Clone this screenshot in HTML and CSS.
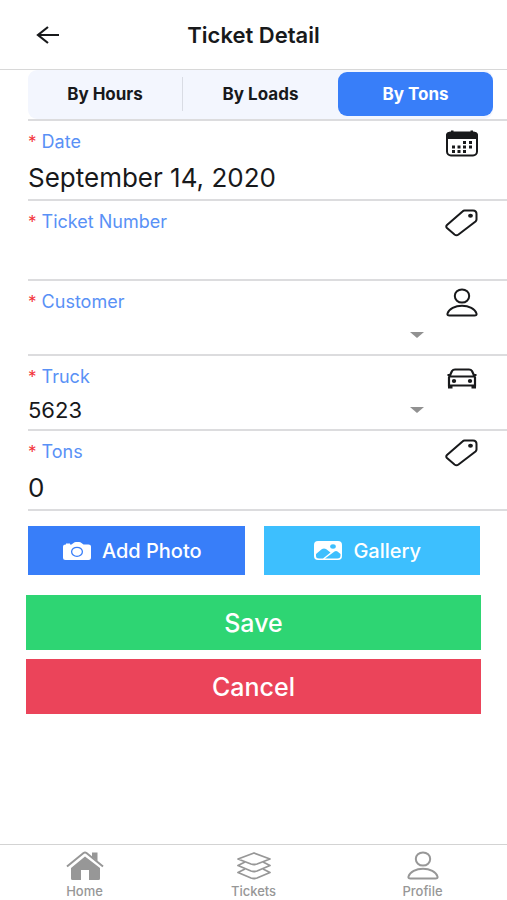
FILE: index.html
```html
<!DOCTYPE html>
<html lang="en">
<head>
    <meta charset="UTF-8">
    <meta name="viewport" content="width=device-width, initial-scale=1.0">
    <title>Ticket Detail</title>
    <link rel="stylesheet" href="styles.css">
</head>
<body>
    <!-- Icons used more than once -->
    <svg class="sprite" aria-hidden="true">
        <symbol id="tag" viewBox="0 0 36 30">
            <path d="M20.5 2.5H29Q32.5 2.5 32.5 6V11.5Q32.5 12.5 31.5 13.5L14.5 26.5Q12.5 28 10.5 26.5L3 20Q1.5 18.500 3 17L18.5 3.5Q19.5 2.5 20.5 2.5Z" fill="none" stroke="currentColor" stroke-width="2"/>
            <ellipse cx="26.500" cy="7.800" rx="2.400" ry="2" fill="currentColor"/>
        </symbol>
        <symbol id="person" viewBox="0 0 36 30">
            <ellipse cx="18" cy="8" rx="7.200" ry="6.600" fill="none" stroke="currentColor" stroke-width="2"/>
            <path d="M5.5 27.500Q3 27.500 3.500 25.500C5 21 11 17.800 18 17.800S31 21 32.500 25.500Q33 27.500 30.500 27.500Z" fill="none" stroke="currentColor" stroke-width="2"/>
        </symbol>
        <symbol id="caret" viewBox="0 0 14 6">
            <path d="M0 0H14L7 6Z" fill="currentColor"/>
        </symbol>
    </svg>

    <header class="header">
        <button class="back" type="button" aria-label="Back">
            <svg viewBox="0 0 24 18" width="24" height="18">
                <path d="M12 1L2 9L12 17M2 9H23" fill="none" stroke="currentColor" stroke-width="2.200"/>
            </svg>
        </button>
        <h1>Ticket Detail</h1>
    </header>

    <main class="content">
        <div class="segment-row">
            <div class="segment">
                <button type="button">By Hours</button>
                <button type="button">By Loads</button>
                <button type="button" class="active">By Tons</button>
            </div>
        </div>

        <form class="form">
            <div class="field">
                <label for="date"><span class="required">*</span> Date</label>
                <svg class="field-icon" viewBox="0 0 36 30">
                    <rect x="3" y="4.500" width="30" height="23" rx="4" fill="none" stroke="currentColor" stroke-width="2"/>
                    <path d="M2 11V7.500Q2 4 5 4H31Q34 4 34 7.500V11ZM7 2.500H9.500V5H7ZM26.500 2.500H29V5H26.500Z" fill="currentColor"/>
                    <path d="M19 14.500h3M25 14.500h3M8 19h3M13.500 19h3M19 19h3M25 19h3M8 23.500h3M13.500 23.500h3M19 23.500h3" stroke="currentColor" stroke-width="3"/>
                </svg>
                <input type="text" id="date" value="September 14, 2020">
            </div>

            <div class="field">
                <label for="ticketNumber"><span class="required">*</span> Ticket Number</label>
                <svg class="field-icon"><use href="#tag"/></svg>
                <input type="text" id="ticketNumber">
            </div>

            <div class="field select-field">
                <label for="customer"><span class="required">*</span> Customer</label>
                <svg class="field-icon"><use href="#person"/></svg>
                <div class="select">
                    <select id="customer">
                        <option value=""></option>
                    </select>
                    <svg class="caret"><use href="#caret"/></svg>
                </div>
            </div>

            <div class="field select-field">
                <label for="truck"><span class="required">*</span> Truck</label>
                <svg class="field-icon" viewBox="0 0 36 30">
                    <path d="M5 14.500L8 8Q9 6.500 11 6.500H25Q27 6.500 28 8L31 14.500V22.500H5ZM5 13.500H31" fill="none" stroke="currentColor" stroke-width="2.200"/>
                    <path d="M4 22H8.500V25.500H4ZM27.500 22H32V25.500H27.500ZM3.500 11H6V13H3.500ZM30 11H32.500V13H30Z" fill="currentColor"/>
                    <ellipse cx="10" cy="18" rx="2.200" ry="1.900" fill="currentColor"/>
                    <ellipse cx="26" cy="18" rx="2.200" ry="1.900" fill="currentColor"/>
                </svg>
                <div class="select">
                    <select id="truck">
                        <option>5623</option>
                    </select>
                    <svg class="caret"><use href="#caret"/></svg>
                </div>
            </div>

            <div class="field">
                <label for="tons"><span class="required">*</span> Tons</label>
                <svg class="field-icon"><use href="#tag"/></svg>
                <input type="text" id="tons" inputmode="decimal" value="0">
            </div>

            <div class="media-buttons">
                <button type="button" class="photo">
                    <svg viewBox="0 0 28 18" width="28" height="18">
                        <path d="M2.500 2.500H3V1.500H7V2.500H8.500L10.500 1Q11.500 0 13 0H16Q17.500 0 18.500 1L20.500 2.500H25.500Q28 2.500 28 4.500V15.500Q28 18 25.500 18H2.500Q0 18 0 15.500V4.500Q0 2.500 2.500 2.500Z" fill="currentColor"/>
                        <ellipse cx="14" cy="9.800" rx="5.400" ry="4.500" fill="none" stroke="#387ef9" stroke-width="1.300"/>
                    </svg>
                    Add Photo
                </button>
                <button type="button" class="gallery">
                    <svg viewBox="0 0 28 19" width="28" height="19">
                        <rect width="28" height="19" rx="4" fill="currentColor"/>
                        <ellipse cx="19" cy="5.500" rx="2.800" ry="2.200" fill="#3dbffe"/>
                        <path d="M2 13L8 8Q10 6.800 12 8L16.500 11.500L9 17.500H5Q2 17.500 2 15ZM11 17.500L20.500 10.500Q22 9.500 23.500 10.500L26.500 13V14.500Q26.500 17.500 23.500 17.500Z" fill="#3dbffe"/>
                    </svg>
                    Gallery
                </button>
            </div>

            <div class="form-buttons">
                <button type="submit" class="save">Save</button>
                <button type="button" class="cancel">Cancel</button>
            </div>
        </form>
    </main>

    <nav class="tabs">
        <a href="#home">
            <svg viewBox="0 0 38 30" width="38" height="30">
                <path d="M19 5.500L34 17V27.500Q34 29 32.500 29H23V19H15V29H6.500Q5 29 5 27.500V17Z" fill="currentColor"/>
                <path d="M1 15.500L17.500 2Q19 1 20.500 2L37 15.500" fill="none" stroke="currentColor" stroke-width="2"/>
                <path d="M26 1.500H31.500V10L26 6Z" fill="currentColor"/>
            </svg>
            Home
        </a>
        <a href="#tickets">
            <svg viewBox="0 0 38 30" width="38" height="30" fill="none" stroke="currentColor" stroke-width="1.800" stroke-linejoin="round">
                <path d="M19 2L35 8L22 13Q19 14 16 13L3 8Z"/>
                <path d="M10 11L3 14.500L16 20Q19 21 22 20L35 14.500L28 11"/>
                <path d="M10 18L3 21.500L16 27Q19 28 22 27L35 21.500L28 18"/>
            </svg>
            Tickets
        </a>
        <a href="#profile">
            <svg width="38" height="30"><use href="#person"/></svg>
            Profile
        </a>
    </nav>
</body>
</html>
```
FILE: styles.css
```css
* {
    box-sizing: border-box;
}
body {
    display: flex;
    flex-direction: column;
    min-height: 100vh;
    margin: 0;
    font-family: Inter, sans-serif;
    background-color: #fff;
    color: #18191b;
}
button, input, select {
    font-family: inherit;
    color: inherit;
    border: none;
    border-radius: 0;
    padding: 0;
    background: none;
}
button {
    cursor: pointer;
}
.sprite {
    display: none;
}

/* Header */
.header {
    display: grid;
    grid-template-columns: 60px 1fr 60px;
    align-items: center;
    height: 70px;
    border-bottom: 1px solid #d8d8d8;
}
.back {
    display: flex;
    justify-content: flex-end;
}
h1 {
    margin: 0;
    text-align: center;
    font-size: 22px;
    font-weight: 600;
}

/* Hours / Loads / Tons switch */
.content {
    flex: 1;
    padding-left: 28px;
}
.segment-row {
    padding-right: 14px;
    border-bottom: 2px solid #dcdcde;
}
.segment {
    display: grid;
    grid-template-columns: 1fr 1fr 1fr;
    height: 49px;
    padding: 2px 0 3px;
    border-radius: 9px;
    background-color: #f3f6fe;
}
.segment button {
    font-size: 17px;
    font-weight: 700;
    border-radius: 9px;
}
.segment button:first-child {
    border-right: 1px solid #d9dce4;
    border-radius: 0;
    margin: 5px 0;
}
.segment .active {
    background-color: #387ef9;
    color: #fff;
}

/* Fields */
.field {
    display: grid;
    grid-template-columns: 1fr 36px;
    grid-template-rows: 38px 1fr;
    height: 80px;
    padding-right: 27px;
    border-bottom: 2px solid #dcdcde;
}
.select-field {
    height: 75px;
}
label {
    padding-top: 11px;
    font-size: 18px;
    line-height: 20px;
    color: #5991f6;
}
.required {
    font-size: 17px;
    color: #f3323a;
}
.field-icon {
    width: 36px;
    height: 30px;
    margin-top: 7px;
}
.field input {
    width: 100%;
    height: 36px;
    font-size: 26px;
}
.select {
    display: flex;
    align-items: center;
    padding-right: 20px;
    height: 32px;
}
.select select {
    flex: 1;
    appearance: none;
    font-size: 22px;
}
.caret {
    width: 14px;
    height: 6px;
    color: #919191;
}

/* Buttons */
.media-buttons {
    display: grid;
    grid-template-columns: 1fr 1fr;
    gap: 19px;
    padding: 15px 27px 0 0;
}
.media-buttons button {
    display: flex;
    align-items: center;
    justify-content: center;
    gap: 11px;
    height: 49px;
    padding-right: 8px;
    font-size: 20px;
    font-weight: 500;
    color: #fff;
}
.photo {
    background-color: #387ef9;
}
.gallery {
    background-color: #3dbffe;
}
.form-buttons {
    display: grid;
    gap: 9px;
    margin-left: -2px;
    padding: 20px 26px 20px 0;
}
.form-buttons button {
    height: 55px;
    font-size: 25px;
    font-weight: 500;
    color: #fff;
}
.save {
    background-color: #2ed573;
}
.cancel {
    background-color: #eb445a;
}

/* Bottom tabs */
.tabs {
    display: grid;
    grid-template-columns: 1fr 1fr 1fr;
    height: 56px;
    border-top: 1px solid #d3d3d3;
}
.tabs a {
    display: flex;
    flex-direction: column;
    align-items: center;
    gap: 3px;
    padding-top: 6px;
    font-size: 13px;
    line-height: 15px;
    font-weight: 500;
    color: #979797;
    text-decoration: none;
}
```
